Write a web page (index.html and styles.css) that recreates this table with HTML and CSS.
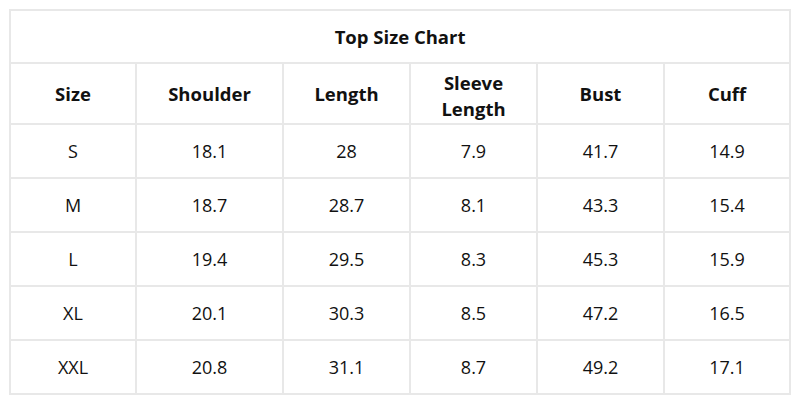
FILE: index.html
```html
<!DOCTYPE html>
<html>
<head>
<meta charset="utf-8">
<link rel="stylesheet" href="styles.css">
</head>
<body>
<table class="chart">
  <colgroup>
    <col class="c1"><col class="c2"><col class="c3"><col class="c4"><col class="c5"><col class="c6">
  </colgroup>
  <thead>
    <tr class="title-row"><th colspan="6">Top Size Chart</th></tr>
    <tr class="head-row">
      <th>Size</th><th>Shoulder</th><th>Length</th><th class="two-line">Sleeve<br>Length</th><th>Bust</th><th>Cuff</th>
    </tr>
  </thead>
  <tbody>
    <tr><td>S</td><td>18.1</td><td>28</td><td>7.9</td><td>41.7</td><td>14.9</td></tr>
    <tr><td>M</td><td>18.7</td><td>28.7</td><td>8.1</td><td>43.3</td><td>15.4</td></tr>
    <tr><td>L</td><td>19.4</td><td>29.5</td><td>8.3</td><td>45.3</td><td>15.9</td></tr>
    <tr><td>XL</td><td>20.1</td><td>30.3</td><td>8.5</td><td>47.2</td><td>16.5</td></tr>
    <tr><td>XXL</td><td>20.8</td><td>31.1</td><td>8.7</td><td>49.2</td><td>17.1</td></tr>
  </tbody>
</table>
</body>
</html>
```
FILE: styles.css
```css
html, body {
  margin: 0;
  padding: 0;
  background: #ffffff;
}
body {
  padding: 9px 9px;
  font-family: "Open Sans", "Inter", sans-serif;
  color: #111111;
}
.chart {
  border-collapse: collapse;
  table-layout: fixed;
  width: 782px;
}
.c1 { width: 126px; }
.c2 { width: 147px; }
.c3 { width: 127px; }
.c4 { width: 127px; }
.c5 { width: 127px; }
.c6 { width: 126px; }
.chart th, .chart td {
  border: 2px solid #e8e8e8;
  text-align: center;
  padding: 0;
}
.chart th {
  font-weight: 700;
  font-size: 18.5px;
  line-height: 27px;
}
.title-row th {
  height: 51px;
}
.head-row th {
  height: 59px;
}
.head-row th.two-line {
  height: auto;
  padding-top: 5px;
  line-height: 26px;
}
.chart td {
  height: 52px;
  font-size: 18px;
  font-weight: 400;
}
```
